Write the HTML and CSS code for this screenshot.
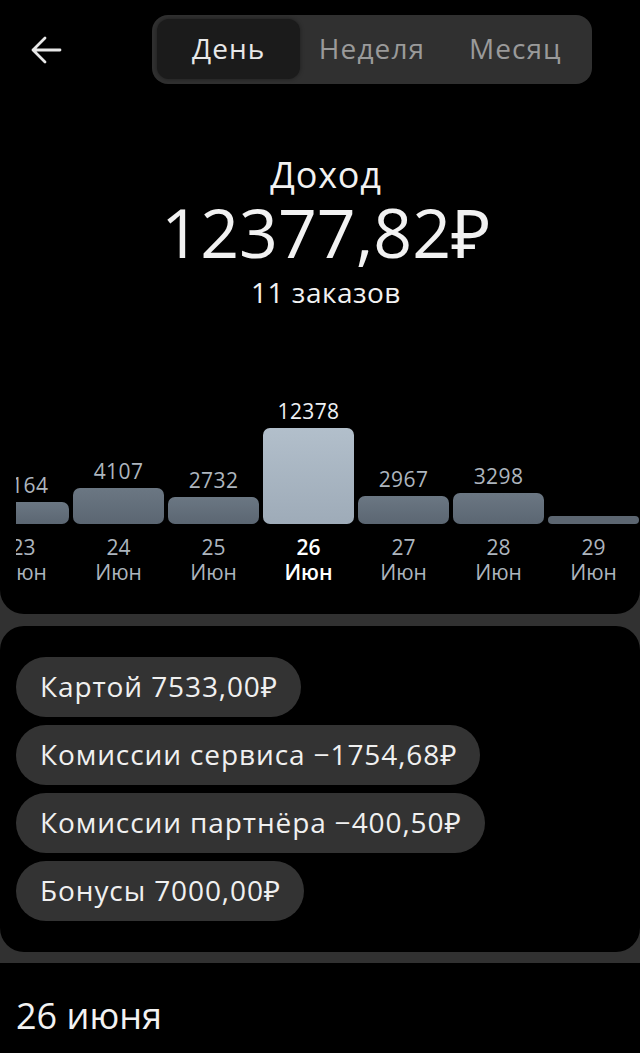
FILE: index.html
```html
<!DOCTYPE html>
<html lang="ru">
<head>
<meta charset="utf-8">
<link rel="stylesheet" href="styles.css">
</head>
<body>
<div class="page">
  <section class="card top">
    <header class="header">
      <button class="back" aria-label="Назад">
        <svg width="34" height="34" viewBox="0 0 34 34"><path d="M31 17H4M16 5L4 17l12 12" fill="none" stroke="#e8e8e8" stroke-width="2.8" stroke-linecap="round" stroke-linejoin="round"/></svg>
      </button>
      <div class="segment">
        <div class="tab active">День</div>
        <div class="tab">Неделя</div>
        <div class="tab">Месяц</div>
      </div>
    </header>
    <div class="income">
      <div class="income-title">Доход</div>
      <div class="income-value">12377,82₽</div>
      <div class="income-orders">11 заказов</div>
    </div>
    <div class="chart">
      <div class="chart-row">
        <div class="col"><div class="bars"><div class="val">2164</div><div class="bar" style="height:22px"></div></div><div class="date">23<br>Июн</div></div>
        <div class="col"><div class="bars"><div class="val">4107</div><div class="bar" style="height:36px"></div></div><div class="date">24<br>Июн</div></div>
        <div class="col"><div class="bars"><div class="val">2732</div><div class="bar" style="height:27px"></div></div><div class="date">25<br>Июн</div></div>
        <div class="col current"><div class="bars"><div class="val">12378</div><div class="bar" style="height:96px"></div></div><div class="date">26<br>Июн</div></div>
        <div class="col"><div class="bars"><div class="val">2967</div><div class="bar" style="height:28px"></div></div><div class="date">27<br>Июн</div></div>
        <div class="col"><div class="bars"><div class="val">3298</div><div class="bar" style="height:31px"></div></div><div class="date">28<br>Июн</div></div>
        <div class="col empty"><div class="bars"><div class="bar" style="height:8px"></div></div><div class="date">29<br>Июн</div></div>
      </div>
    </div>
  </section>
  <section class="card summary">
    <div class="chip">Картой 7533,00₽</div>
    <div class="chip">Комиссии сервиса −1754,68₽</div>
    <div class="chip">Комиссии партнёра −400,50₽</div>
    <div class="chip">Бонусы 7000,00₽</div>
  </section>
  <section class="day">
    <h2 class="day-title">26 июня</h2>
  </section>
</div>
</body>
</html>
```

FILE: styles.css
```css
* { box-sizing: border-box; }
html, body { margin: 0; padding: 0; }
body {
  background: #313131;
  font-family: "Open Sans", "Noto Sans", "DejaVu Sans", sans-serif;
  color: #f2f2f2;
  width: 640px;
  height: 1053px;
  overflow: hidden;
}
.page { display: flex; flex-direction: column; height: 1053px; }
.card { background: #000; }
.top {
  height: 614px;
  border-radius: 0 0 24px 24px;
}
.header {
  display: flex;
  align-items: center;
  height: 100px;
  padding: 15px 0 16px 0;
}
.back {
  background: none;
  border: 0;
  padding: 0;
  margin-left: 29px;
  width: 34px;
  height: 34px;
  display: flex;
  cursor: pointer;
}
.segment {
  margin-left: 89px;
  width: 440px;
  height: 69px;
  background: #303030;
  border-radius: 16px;
  padding: 4px 5px 5px 5px;
  display: flex;
}
.tab {
  flex: 1;
  display: flex;
  align-items: center;
  justify-content: center;
  font-size: 28px;
  letter-spacing: 1.1px;
  color: #9a9a9a;
  border-radius: 12px;
  padding-bottom: 2px;
}
.tab.active {
  background: #1b1b1b;
  color: #e8e8e8;
  box-shadow: 0 0 4px rgba(0,0,0,0.4);
}
.income {
  display: flex;
  flex-direction: column;
  align-items: center;
  margin-top: 52px;
  padding-left: 12px;
}
.income-title { font-size: 36px; line-height: 46px; letter-spacing: 0.8px; }
.income-value { font-size: 68px; line-height: 68px; }
.income-orders { font-size: 28px; line-height: 32px; letter-spacing: 0.5px; margin-top: 10px; }
.chart {
  margin-left: 16px;
  overflow: hidden;
  margin-top: 86px;
}
.chart-row {
  display: flex;
  margin-left: -40px;
}
.col {
  width: 95px;
  flex: none;
  display: flex;
  flex-direction: column;
  padding: 0 2px;
}
.bars {
  height: 130px;
  display: flex;
  flex-direction: column;
  justify-content: flex-end;
  align-items: stretch;
}
.val {
  text-align: center;
  font-size: 21px;
  line-height: 24px;
  letter-spacing: 0.4px;
  color: #adb5be;
  margin-bottom: 5px;
}
.bar {
  background: linear-gradient(180deg, #6b7783, #5b6672);
  border-radius: 7px;
}
.current .val { color: #eef1f4; }
.current .bar { background: linear-gradient(180deg, #b2bfcb, #9eabb8); }
.empty .bar { border-radius: 5px; background: #5c6671; }
.date {
  text-align: center;
  font-size: 21px;
  line-height: 25px;
  color: #adb5be;
  margin-top: 11px;
}
.current .date { color: #fff; font-weight: 600; }
.summary {
  margin-top: 12px;
  border-radius: 24px;
  padding: 31px 16px;
  display: flex;
  flex-direction: column;
  align-items: flex-start;
  gap: 8px;
}
.chip {
  height: 60px;
  border-radius: 30px;
  background: #333;
  color: #f0f0f0;
  font-size: 28px;
  letter-spacing: 0.9px;
  display: flex;
  align-items: center;
  padding: 0 23px 2px 24px;
}
.day {
  margin-top: 11px;
  background: #000;
  flex: 1;
  padding: 31px 16px 0;
}
.day-title {
  margin: 0;
  font-weight: 400;
  font-size: 36px;
  line-height: 44px;
  color: #f2f2f2;
}
```
